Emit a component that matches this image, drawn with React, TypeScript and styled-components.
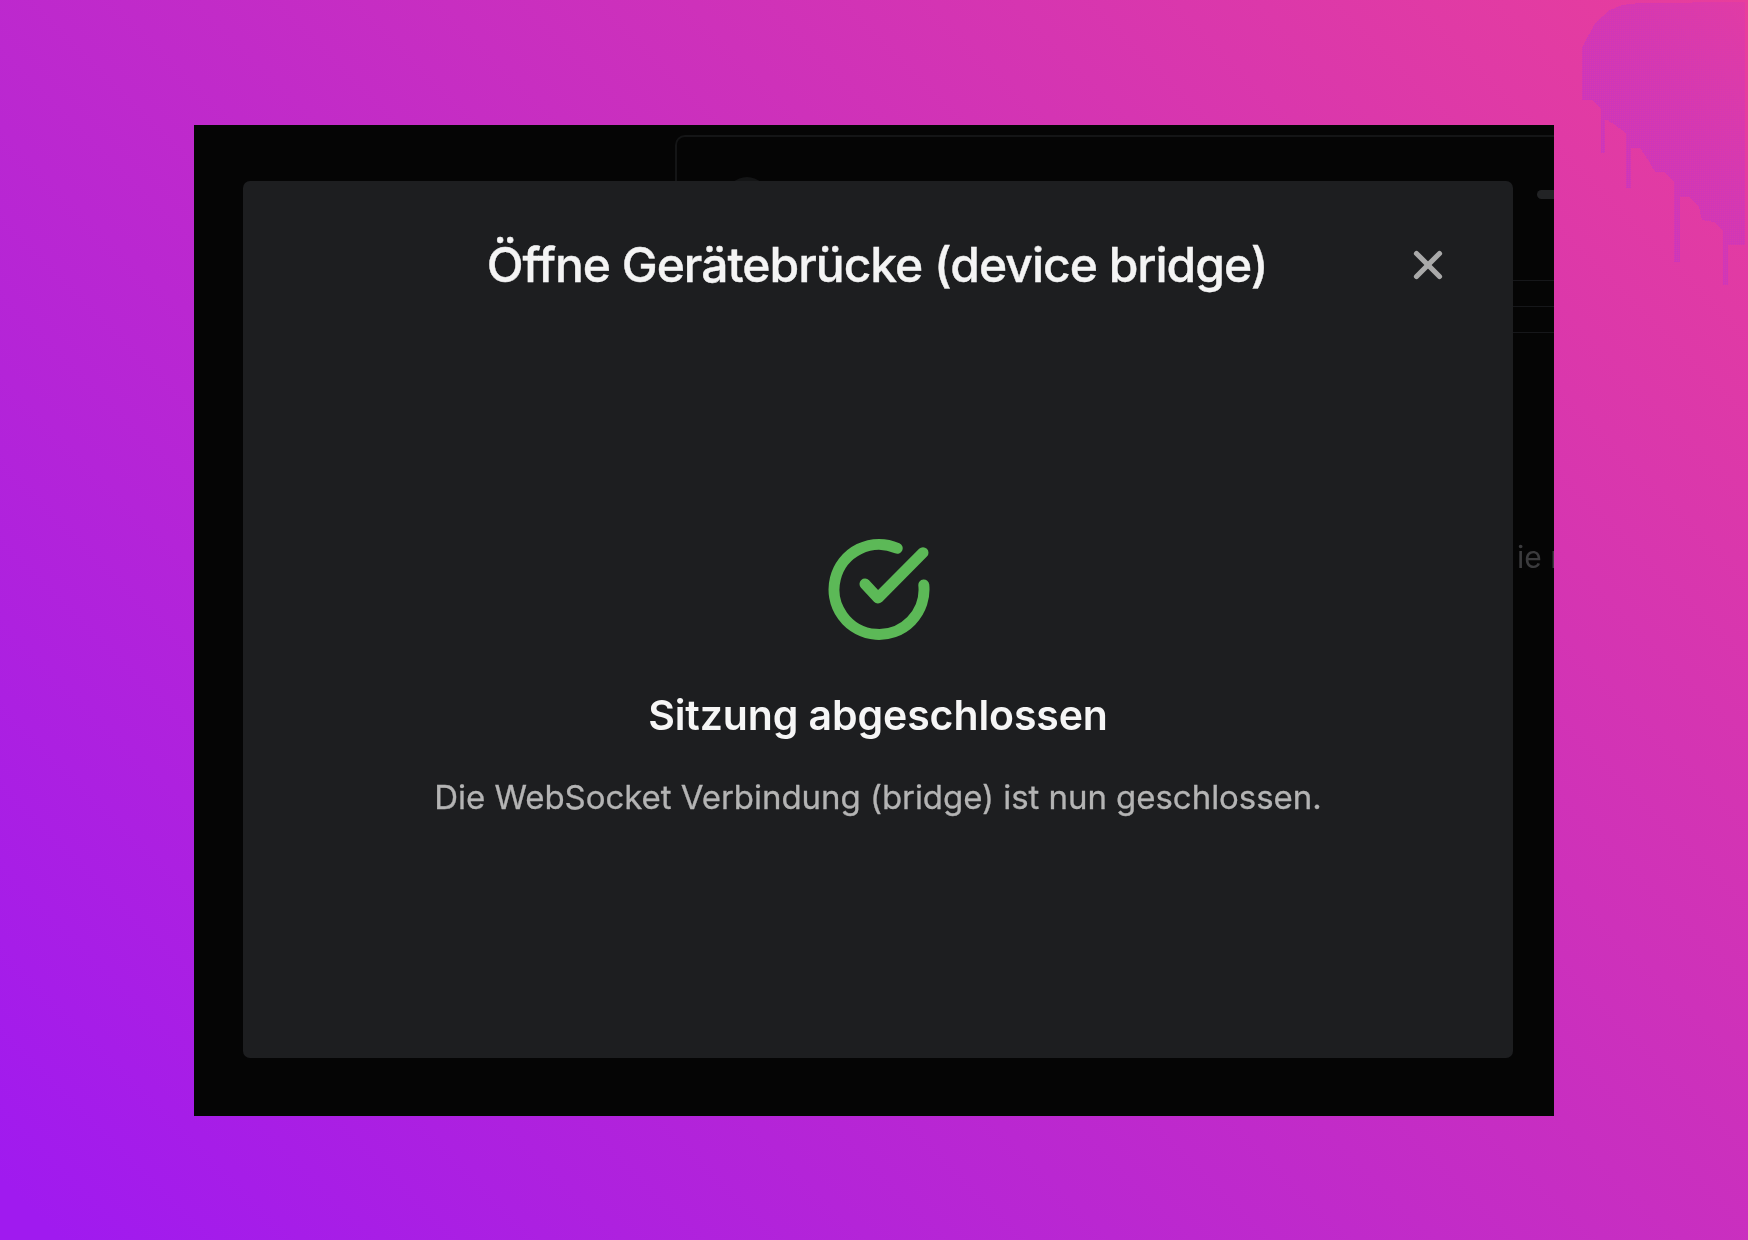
import React from "react";
import styled, { createGlobalStyle } from "styled-components";
import { X } from "lucide-react";

const GlobalStyle = createGlobalStyle`
  html, body {
    margin: 0;
    padding: 0;
  }
  body {
    font-family: Inter, "Noto Sans", sans-serif;
  }
`;

export default function App() {
  return (
    <>
      <GlobalStyle />
      <Page>
        <DripStain />
        <AppWindow>
          <BackCard>
            <BackHeader>
              <BackAvatar />
              <BackPill />
            </BackHeader>
            <BackRow />
            <BackRow />
            <BackRow />
            <BackText>ie n</BackText>
          </BackCard>
          <Dialog>
            <DialogHeader>
              <DialogTitle>Öffne Gerätebrücke (device bridge)</DialogTitle>
              <CloseButton>
                <X size={46} strokeWidth={2.7} />
              </CloseButton>
            </DialogHeader>
            <DialogBody>
              <DoneIcon />
              <DoneTitle>Sitzung abgeschlossen</DoneTitle>
              <DoneText>Die WebSocket Verbindung (bridge) ist nun geschlossen.</DoneText>
            </DialogBody>
          </Dialog>
        </AppWindow>
      </Page>
    </>
  );
}

function DoneIcon() {
  return (
    <DoneSvg viewBox="0 0 110 110" fill="none" stroke="#5cb957" strokeWidth="11" strokeLinecap="round" strokeLinejoin="round">
      <path d="M74.2 14.3A45 45 0 1 0 100.8 51" />
      <path d="M42 50 L55 64 L100 18.7" />
    </DoneSvg>
  );
}

function DripStain() {
  return (
    <StainSvg viewBox="0 0 164 290" shapeRendering="crispEdges">
      <defs>
        <linearGradient id="stainFade" x1="0" y1="0.9" x2="1" y2="0">
          <stop offset="0.2" stopColor="#c935bf" stopOpacity="1" />
          <stop offset="0.6" stopColor="#c935bf" stopOpacity="0.7" />
          <stop offset="1" stopColor="#c935bf" stopOpacity="0.25" />
        </linearGradient>
        <pattern id="stainDots" width="2" height="2" patternUnits="userSpaceOnUse">
          <rect width="1" height="1" fill="#e23ca4" fillOpacity="0.7" />
          <rect x="1" y="1" width="1" height="1" fill="#e23ca4" fillOpacity="0.2" />
        </pattern>
        <path
          id="stainShape"
          d="M0 48 L13 23 L28 10 L40 5 L57 3 L163 2 L163 245 L146 245 L146 285 L141 285 L141 230 L132 222 L120 220 L117 207 L108 197 L98 197 L98 262 L92 262 L92 182 L83 172 L73 172 L68 163 L58 148 L49 148 L49 188 L44 188 L44 133 L33 125 L25 120 L23 120 L23 153 L19 153 L19 108 L10 100 L0 100 Z"
        />
      </defs>
      <use href="#stainShape" fill="url(#stainFade)" />
      <use href="#stainShape" fill="url(#stainDots)" />
    </StainSvg>
  );
}

const Page = styled.div`
  position: relative;
  width: 1748px;
  height: 1240px;
  padding: 125px 0 0 194px;
  box-sizing: border-box;
  overflow: hidden;
  background: linear-gradient(45deg, #a01aef 2%, #e83e9c 100%);
`;

const StainSvg = styled.svg`
  position: absolute;
  top: 0;
  left: 1582px;
  width: 164px;
  height: 290px;
`;

const AppWindow = styled.div`
  position: relative;
  width: 1360px;
  height: 991px;
  overflow: hidden;
  background: #050505;
`;

const BackCard = styled.div`
  box-sizing: border-box;
  display: flex;
  flex-direction: column;
  width: 1100px;
  margin: 10px 0 0 481px;
  border-top: 2px solid #141516;
  border-left: 2px solid #141516;
  border-top-left-radius: 10px;
`;

const BackHeader = styled.div`
  display: flex;
  gap: 770px;
  height: 118px;
  padding: 40px 0 0 50px;
  box-sizing: border-box;
`;

const BackAvatar = styled.div`
  width: 40px;
  height: 40px;
  border-radius: 50%;
  background: #141516;
`;

const BackPill = styled.div`
  width: 60px;
  height: 9px;
  margin-top: 13px;
  border-radius: 5px;
  background: #222325;
`;

const BackRow = styled.div`
  height: 25px;
  border-bottom: 1px solid #16171a;
`;

const BackText = styled.div`
  margin: 204px 0 0 840px;
  font-size: 30px;
  line-height: 40px;
  color: #3b3b3d;
  white-space: nowrap;
  filter: blur(0.6px);
`;

const Dialog = styled.div`
  position: absolute;
  top: 56px;
  left: 49px;
  width: 1270px;
  height: 877px;
  display: flex;
  flex-direction: column;
  background: #1d1e20;
  border-radius: 7px;
`;

const DialogHeader = styled.div`
  display: grid;
  grid-template-columns: 1fr auto 1fr;
  align-items: center;
  padding: 56px 62px 0 60px;
`;

const DialogTitle = styled.h2`
  grid-column: 2;
  margin: 0;
  font-size: 48px;
  line-height: 56px;
  font-weight: 500;
  letter-spacing: -1px;
  color: #f4f4f4;
  -webkit-text-stroke: 0.4px #f4f4f4;
  filter: blur(0.6px);
`;

const CloseButton = styled.div`
  grid-column: 3;
  justify-self: end;
  display: flex;
  color: #a9a9a9;
  filter: blur(0.5px);
`;

const DialogBody = styled.div`
  display: flex;
  flex-direction: column;
  align-items: center;
  padding-top: 241px;
`;

const DoneSvg = styled.svg`
  width: 110px;
  height: 110px;
  filter: blur(0.4px);
`;

const DoneTitle = styled.h3`
  margin: 47px 0 0;
  font-size: 41px;
  line-height: 48px;
  font-weight: 600;
  letter-spacing: -0.1px;
  color: #f6f6f6;
  filter: blur(0.6px);
`;

const DoneText = styled.p`
  margin: 37px 0 0;
  font-size: 33px;
  line-height: 42px;
  letter-spacing: -0.05px;
  color: #b4b4b4;
  -webkit-text-stroke: 0.3px #b4b4b4;
  filter: blur(0.6px);
`;
